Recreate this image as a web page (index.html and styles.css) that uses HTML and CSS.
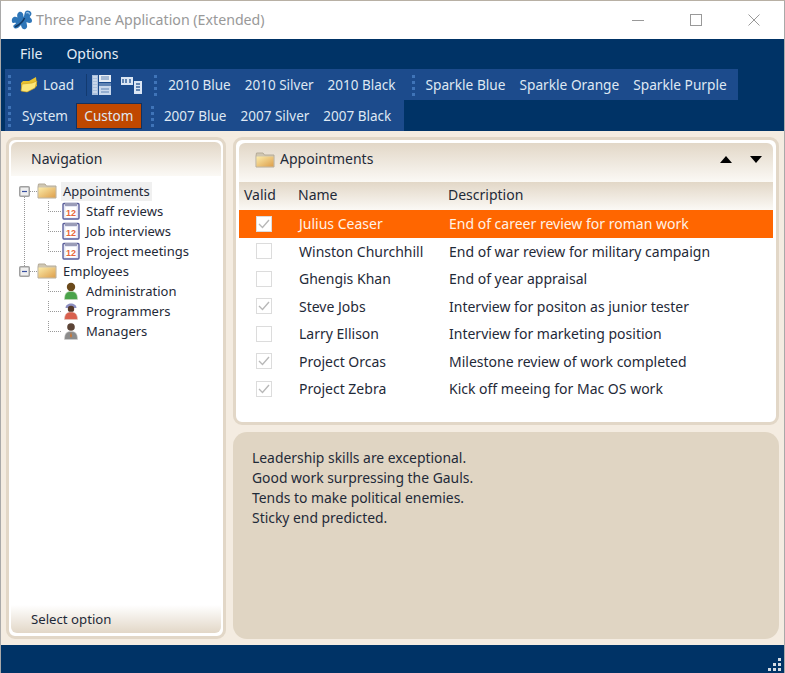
FILE: index.html
```html
<!DOCTYPE html>
<html>
  <head>
    <title>Three Pane Application (Extended)</title>
    <meta charset="utf-8"/>
    <link rel="stylesheet" href="styles.css">
  </head>
  <body>
    <svg class="defs" width="0" height="0">
      <defs>
        <linearGradient id="fold" x1="0" y1="0" x2="1" y2="1">
          <stop offset="0" stop-color="#fcecaa"/>
          <stop offset="1" stop-color="#dd9f4c"/>
        </linearGradient>
        <symbol id="folder" viewBox="0 0 20 16">
          <path d="M1 4 L1.5 1 H8 L9.5 3 H19 V15 H1 Z" fill="#cfc6b2" stroke="#b5ab98"/>
          <rect x="1.5" y="4.5" width="17" height="10" fill="url(#fold)"/>
        </symbol>
        <symbol id="calendar" viewBox="0 0 18 18">
          <rect x="1" y="1.5" width="16" height="15.5" rx="1" fill="#e4e6f4" stroke="#5b5f9c" stroke-width="1.4"/>
          <rect x="3" y="1" width="12" height="3" fill="#9a9cb8"/>
          <rect x="3.5" y="5" width="11" height="10.5" fill="#fff"/>
          <text x="9" y="14" class="cal-num">12</text>
        </symbol>
        <symbol id="man-green" viewBox="0 0 18 18">
          <circle cx="9" cy="5" r="4.2" fill="#6b4a1c"/>
          <path d="M2.5 17.5 C2.5 11 5 9.5 9 9.5 C13 9.5 15.5 11 15.5 17.5 Z" fill="#4aa34a" stroke="#c8d8c0" stroke-width=".6"/>
        </symbol>
        <symbol id="man-red" viewBox="0 0 18 18">
          <path d="M3.5 6 C3.5 0 14.5 0 14.5 6 Z" fill="#8d8fc0"/>
          <circle cx="9" cy="7" r="3.2" fill="#55392a"/>
          <path d="M2.5 17.5 C2.5 12 5 10 9 10 C13 10 15.5 12 15.5 17.5 Z" fill="#d9604e" stroke="#e0c8c0" stroke-width=".6"/>
        </symbol>
        <symbol id="man-grey" viewBox="0 0 18 18">
          <circle cx="9" cy="5" r="3.8" fill="#5c4436"/>
          <path d="M2.5 17.5 C2.5 11 5 9.5 9 9.5 C13 9.5 15.5 11 15.5 17.5 Z" fill="#8b8b8b" stroke="#d0d0d0" stroke-width=".6"/>
          <path d="M9 10 L8 14 L9 16 L10 14 Z" fill="#d0752e"/>
        </symbol>
        <symbol id="check-on" viewBox="0 0 16 16">
          <rect x=".5" y=".5" width="15" height="15" fill="#fff" stroke="#dcdcdc"/>
          <path d="M3 8 L6.5 11.5 L13 4" fill="none" stroke="#b8b8b8" stroke-width="1.4"/>
        </symbol>
        <symbol id="check-off" viewBox="0 0 16 16">
          <rect x=".5" y=".5" width="15" height="15" fill="#fff" stroke="#dcdcdc"/>
        </symbol>
        <symbol id="grip" viewBox="0 0 3 24">
          <path d="M0 2h3v3H0zM0 8h3v3H0zM0 14h3v3H0zM0 20h3v3H0z" fill="#3f74b8"/>
        </symbol>
        <symbol id="expander" viewBox="0 0 11 11">
          <rect x=".75" y=".75" width="9.5" height="9.5" rx="1" fill="#efefef" stroke="#a0a0a0" stroke-width="1.5"/>
          <path d="M3 5.5H8" stroke="#3a50a0" stroke-width="1.2"/>
        </symbol>
      </defs>
    </svg>

    <div class="window">
      <div class="titlebar">
        <svg class="app-icon" width="22" height="22" viewBox="0 0 22 22">
          <path d="M1 13 C0 8 4 7 6.5 8.5 C5 4 9 1 11.5 4 C13 6 12 7 12.5 8 C14 6 13 1.5 16.5 1.5 C20 1.5 22 5 19 7.5 C18 8.5 21 9 21 11.5 C21 15 17.5 14 15.5 13 C15.5 16 17.5 18 14.5 20 C11 21 10.5 18 10 16 C8 19 4 21 2.5 18 C1.5 16 5 15 5 14 C4 13 2 15 1 13 Z" fill="#2f76b8"/>
          <path d="M4 18 C8 16 12 13 13.5 9" fill="none" stroke="#123a66" stroke-width="1.6"/>
          <path d="M15 4 C17 3 18.5 4 18.5 5.5" fill="none" stroke="#9cc6ea" stroke-width="1.2"/>
        </svg>
        <span class="title-text">Three Pane Application (Extended)</span>
        <div class="win-buttons">
          <svg class="win-btn" width="12" height="12" viewBox="0 0 12 12"><path d="M0 6.5H12" stroke="#999"/></svg>
          <svg class="win-btn" width="12" height="12" viewBox="0 0 12 12"><rect x=".5" y=".5" width="11" height="11" fill="none" stroke="#999"/></svg>
          <svg class="win-btn" width="12" height="12" viewBox="0 0 12 12"><path d="M.5 .5L11.5 11.5M11.5 .5L.5 11.5" stroke="#999"/></svg>
        </div>
      </div>

      <div class="chrome">
        <div class="menubar">
          <span class="menu-item">File</span>
          <span class="menu-item">Options</span>
        </div>
        <div class="toolstrip">
          <svg class="grip" width="3" height="24"><use href="#grip"/></svg>
          <span class="tool load">
            <svg width="19" height="18" viewBox="0 0 19 18">
              <path d="M1 7 L3 5 L9 5 L16 1 L17 10 L7 16 L2 15 Z" fill="#e8c22e"/>
              <path d="M1 15 L2 8 L12 7 L17 5 L15 12 L7 16 Z" fill="#fbe77a" stroke="#c89a1c" stroke-width=".6"/>
            </svg>
            Load
          </span>
          <span class="sep"></span>
          <svg class="tool-icon" width="19" height="20" viewBox="0 0 19 20">
            <rect x="0" y="0" width="6" height="20" fill="#a9bfdc"/>
            <path d="M1 2H5M1 5H5M1 8H5M1 11H5M1 14H5M1 17H5" stroke="#e8eef6"/>
            <rect x="7" y="0" width="12" height="7" fill="#e8eef6"/>
            <path d="M9 2H17M9 4H17" stroke="#5f83b4"/>
            <rect x="7" y="8" width="12" height="12" fill="#c9d8ec"/>
            <rect x="7" y="8" width="12" height="3" fill="#5f83b4"/>
            <path d="M9 14H17M9 17H17" stroke="#5f83b4"/>
          </svg>
          <svg class="tool-icon wide" width="21" height="18" viewBox="0 0 21 18">
            <rect x="0" y="1" width="12" height="8" fill="#dbe6f4"/>
            <path d="M2 3V7M5 3V7M9 3V7" stroke="#3b659c" stroke-width="1.5"/>
            <rect x="13" y="5" width="8" height="13" fill="#dbe6f4"/>
            <path d="M15 8H19M15 11H19M15 14H19" stroke="#3b659c" stroke-width="1.5"/>
          </svg>
          <svg class="grip grip-mid after-icon" width="3" height="24"><use href="#grip"/></svg>
          <span class="tool">2010 Blue</span>
          <span class="tool">2010 Silver</span>
          <span class="tool">2010 Black</span>
          <svg class="grip grip-mid before-sparkle" width="3" height="24"><use href="#grip"/></svg>
          <span class="tool sparkle">Sparkle Blue</span>
          <span class="tool sparkle">Sparkle Orange</span>
          <span class="tool sparkle">Sparkle Purple</span>
        </div>
        <div class="toolstrip second">
          <svg class="grip" width="3" height="24"><use href="#grip"/></svg>
          <span class="tool">System</span>
          <span class="tool active">Custom</span>
          <svg class="grip grip-mid" width="3" height="24"><use href="#grip"/></svg>
          <span class="tool">2007 Blue</span>
          <span class="tool">2007 Silver</span>
          <span class="tool">2007 Black</span>
        </div>
      </div>

      <div class="main">
        <div class="panel nav-panel">
          <div class="panel-inner">
            <div class="nav-head">Navigation</div>
            <div class="tree">
              <div class="tree-row">
                <svg class="gutter" width="18" height="20" viewBox="0 0 18 20">
                  <path d="M11 10.5H18M5.5 16V20" stroke="#999" stroke-dasharray="1 1"/>
                  <use href="#expander" x="0" y="5" width="11" height="11"/>
                </svg>
                <svg width="20" height="16"><use href="#folder"/></svg>
                <span class="tree-label on">Appointments</span>
              </div>
              <div class="tree-row child">
                <svg class="gutter" width="43" height="20" viewBox="0 0 43 20">
                  <path d="M5.5 0V20M29.5 0V10M29 10.5H43" stroke="#999" stroke-dasharray="1 1"/>
                </svg>
                <svg width="18" height="18"><use href="#calendar"/></svg>
                <span class="tree-label">Staff reviews</span>
              </div>
              <div class="tree-row child">
                <svg class="gutter" width="43" height="20" viewBox="0 0 43 20">
                  <path d="M5.5 0V20M29.5 0V10M29 10.5H43" stroke="#999" stroke-dasharray="1 1"/>
                </svg>
                <svg width="18" height="18"><use href="#calendar"/></svg>
                <span class="tree-label">Job interviews</span>
              </div>
              <div class="tree-row child">
                <svg class="gutter" width="43" height="20" viewBox="0 0 43 20">
                  <path d="M5.5 0V20M29.5 0V10M29 10.5H43" stroke="#999" stroke-dasharray="1 1"/>
                </svg>
                <svg width="18" height="18"><use href="#calendar"/></svg>
                <span class="tree-label">Project meetings</span>
              </div>
              <div class="tree-row">
                <svg class="gutter" width="18" height="20" viewBox="0 0 18 20">
                  <path d="M11 10.5H18M5.5 0V5" stroke="#999" stroke-dasharray="1 1"/>
                  <use href="#expander" x="0" y="5" width="11" height="11"/>
                </svg>
                <svg width="20" height="16"><use href="#folder"/></svg>
                <span class="tree-label">Employees</span>
              </div>
              <div class="tree-row child">
                <svg class="gutter" width="43" height="20" viewBox="0 0 43 20">
                  <path d="M29.5 0V10M29 10.5H43" stroke="#999" stroke-dasharray="1 1"/>
                </svg>
                <svg width="18" height="18"><use href="#man-green"/></svg>
                <span class="tree-label">Administration</span>
              </div>
              <div class="tree-row child">
                <svg class="gutter" width="43" height="20" viewBox="0 0 43 20">
                  <path d="M29.5 0V10M29 10.5H43" stroke="#999" stroke-dasharray="1 1"/>
                </svg>
                <svg width="18" height="18"><use href="#man-red"/></svg>
                <span class="tree-label">Programmers</span>
              </div>
              <div class="tree-row child">
                <svg class="gutter" width="43" height="20" viewBox="0 0 43 20">
                  <path d="M29.5 0V10M29 10.5H43" stroke="#999" stroke-dasharray="1 1"/>
                </svg>
                <svg width="18" height="18"><use href="#man-grey"/></svg>
                <span class="tree-label">Managers</span>
              </div>
            </div>
            <div class="nav-foot">Select option</div>
          </div>
        </div>

        <div class="right">
          <div class="panel list-panel">
            <div class="panel-inner">
              <div class="list-head">
                <svg width="20" height="16"><use href="#folder"/></svg>
                <span class="list-title">Appointments</span>
                <span class="arrow up"></span>
                <span class="arrow down"></span>
              </div>
              <div class="row head">
                <span>Valid</span>
                <span>Name</span>
                <span>Description</span>
              </div>
              <div class="row selected">
                <svg class="check" width="16" height="16"><use href="#check-on"/></svg>
                <span>Julius Ceaser</span>
                <span>End of career review for roman work</span>
              </div>
              <div class="row">
                <svg class="check" width="16" height="16"><use href="#check-off"/></svg>
                <span>Winston Churchhill</span>
                <span>End of war review for military campaign</span>
              </div>
              <div class="row">
                <svg class="check" width="16" height="16"><use href="#check-off"/></svg>
                <span>Ghengis Khan</span>
                <span>End of year appraisal</span>
              </div>
              <div class="row">
                <svg class="check" width="16" height="16"><use href="#check-on"/></svg>
                <span>Steve Jobs</span>
                <span>Interview for positon as junior tester</span>
              </div>
              <div class="row">
                <svg class="check" width="16" height="16"><use href="#check-off"/></svg>
                <span>Larry Ellison</span>
                <span>Interview for marketing position</span>
              </div>
              <div class="row">
                <svg class="check" width="16" height="16"><use href="#check-on"/></svg>
                <span>Project Orcas</span>
                <span>Milestone review of work completed</span>
              </div>
              <div class="row">
                <svg class="check" width="16" height="16"><use href="#check-on"/></svg>
                <span>Project Zebra</span>
                <span>Kick off meeing for Mac OS work</span>
              </div>
            </div>
          </div>
          <div class="notes">
            Leadership skills are exceptional.<br>
            Good work surpressing the Gauls.<br>
            Tends to make political enemies.<br>
            Sticky end predicted.
          </div>
        </div>
      </div>

      <div class="statusbar">
        <svg width="16" height="14" viewBox="0 0 16 14">
          <path d="M10 0h3v3h-3zM5 5h3v3H5zM10 5h3v3h-3zM0 10h3v3H0zM5 10h3v3H5zM10 10h3v3h-3z" fill="#d5dbe3"/>
        </svg>
      </div>
    </div>
  </body>
</html>
```

FILE: styles.css
```css
html, body {
  height: 100%;
  margin: 0;
  padding: 0;
}
body {
  font-family: "Noto Sans", "Open Sans", sans-serif;
  font-size: 14px;
  color: #1f2a38;
  background: #fff;
  overflow: hidden;
}
.defs {
  position: absolute;
}
.cal-num {
  font-family: "Liberation Sans", sans-serif;
  font-size: 9px;
  font-weight: bold;
  text-anchor: middle;
  fill: #e8673a;
}

.window {
  display: flex;
  flex-direction: column;
  height: 673px;
  box-sizing: border-box;
  border-left: 1px solid #a9a9a9;
  border-right: 1px solid #a9a9a9;
  border-top: 1px solid #b8b0a4;
}

/* title bar */
.titlebar {
  display: flex;
  align-items: center;
  height: 38px;
  padding-left: 10px;
  background: #fff;
}
.title-text {
  margin-left: 3px;
  margin-bottom: 2px;
  color: #999;
  font-size: 14.2px;
}
.win-buttons {
  display: flex;
  gap: 46px;
  margin-left: auto;
  margin-right: 24px;
}

/* menu and tool strips */
.chrome {
  background: #003366;
  height: 92px;
  padding-left: 4px;
}
.menubar {
  display: flex;
  height: 30px;
  box-sizing: border-box;
  align-items: center;
  padding: 0 0 2px 15px;
  gap: 24px;
  color: #e4ecf5;
}
.toolstrip {
  display: inline-flex;
  align-items: center;
  height: 31px;
  padding: 0 4px 0 3px;
  background: #1c4b8c;
  color: #dfe8f3;
  font-size: 13.5px;
  vertical-align: top;
}
.toolstrip.second {
  display: flex;
  width: 399px;
  box-sizing: border-box;
}
.grip {
  flex: none;
  margin-right: 4px;
}
.grip-mid {
  margin-left: 8px;
}
.grip-mid.after-icon {
  margin-left: 12px;
}
.grip-mid.before-sparkle {
  margin-left: 9px;
}
.second .grip-mid {
  margin-left: 9px;
  margin-right: 3px;
}
.tool {
  display: flex;
  align-items: center;
  gap: 4px;
  padding: 0 7px;
  white-space: nowrap;
}
.tool.sparkle {
  font-size: 13.7px;
}
.load {
  padding-left: 5px;
  padding-right: 12px;
}
.tool.active {
  box-sizing: border-box;
  justify-content: center;
  width: 66px;
  height: 26px;
  padding: 0;
  background: #c04800;
  border: 1px solid #15315c;
  margin-left: 1px;
}
.sep {
  width: 1px;
  height: 22px;
  background: #123a70;
}
.tool-icon {
  margin-left: 5px;
}
.tool-icon.wide {
  margin-left: 10px;
}

/* three panes */
.main {
  flex: 1;
  display: grid;
  grid-template-columns: 220px 546px;
  column-gap: 7px;
  padding: 6px 5px 6px;
  background: #f4ece1;
  min-height: 0;
}
.panel {
  border: 3px solid #e2d7c7;
  border-radius: 9px;
  padding: 2px 2px 3px;
  background: #fff;
  box-sizing: border-box;
  display: flex;
}
.panel-inner {
  flex: 1;
  display: flex;
  flex-direction: column;
  min-width: 0;
}

.nav-head {
  height: 34px;
  line-height: 33px;
  padding-left: 20px;
  border-radius: 6px 6px 0 0;
  background: linear-gradient(#e2d7c7, #fbf9f5);
}
.tree {
  flex: 1;
  padding: 5px 0 0 8px;
  font-size: 13px;
}
.tree-row {
  display: flex;
  align-items: center;
  height: 20px;
}
.gutter {
  flex: none;
}
.tree-label {
  margin-left: 4px;
  margin-bottom: 1px;
  padding: 0 2px;
  white-space: nowrap;
}
.tree-label.on {
  height: 19px;
  margin-bottom: 0;
  line-height: 19px;
  background: #f0f0f0;
}
.nav-foot {
  height: 28px;
  line-height: 28px;
  padding-left: 20px;
  font-size: 13.2px;
  border-radius: 0 0 6px 6px;
  background: linear-gradient(#fff, #e2d7c7);
}

.right {
  display: flex;
  flex-direction: column;
  gap: 7px;
  min-height: 0;
}
.list-panel {
  height: 288px;
  padding: 3px;
}
.list-head {
  display: flex;
  align-items: center;
  box-sizing: border-box;
  height: 39px;
  padding: 0 0 6px 16px;
  border-radius: 6px 6px 0 0;
  background: linear-gradient(#e2d7c7, #fbf9f5);
}
.list-title {
  margin-left: 5px;
  margin-bottom: 2px;
}
.arrow {
  width: 0;
  height: 0;
  border-left: 6px solid transparent;
  border-right: 6px solid transparent;
}
.arrow.up {
  margin-left: auto;
  border-bottom: 7px solid #000;
}
.arrow.down {
  margin-left: 18px;
  margin-right: 11px;
  border-top: 7px solid #000;
}
.row {
  display: grid;
  grid-template-columns: 54px 150px 1fr;
  align-items: center;
  height: 27.5px;
  padding-left: 5px;
}
.row span {
  padding-left: 1px;
}
.row.head {
  box-sizing: border-box;
  height: 28px;
  padding-bottom: 3px;
  background: linear-gradient(#e2d7c7, #fbf9f5);
}
.row.head span {
  padding-left: 0;
}
.row.selected {
  background: #ff6600;
  color: #fff2e6;
}
.check {
  margin-left: 12px;
}
.notes {
  flex: 1;
  padding: 16px 19px;
  border-radius: 14px;
  background: #e0d5c3;
  font-size: 13.9px;
  line-height: 20px;
}

.statusbar {
  display: flex;
  align-items: flex-end;
  justify-content: flex-end;
  height: 27px;
  padding: 0 0 1px;
  background: #003366;
}
```
